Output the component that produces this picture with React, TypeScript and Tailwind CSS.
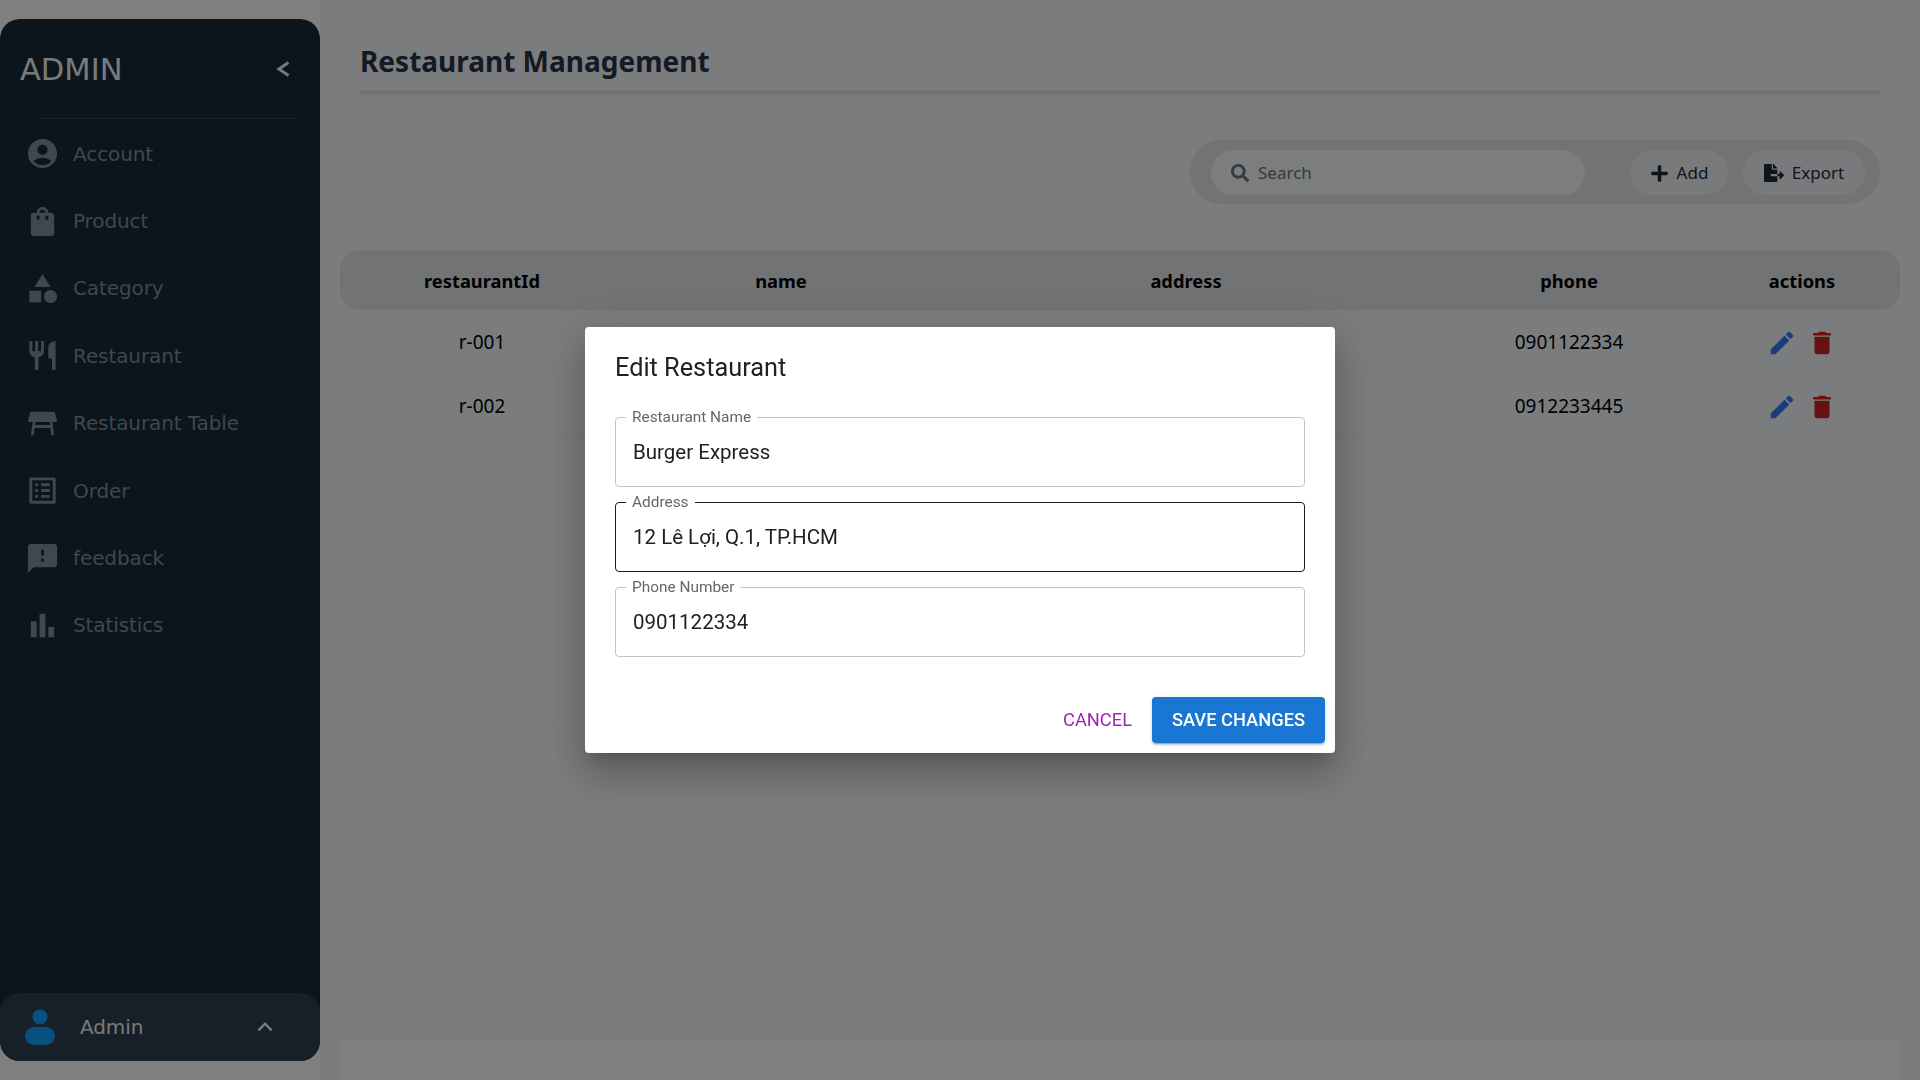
import {
  MdAccountCircle,
  MdBarChart,
  MdCategory,
  MdDelete,
  MdEdit,
  MdFeedback,
  MdKeyboardArrowUp,
  MdListAlt,
  MdRestaurant,
  MdShoppingBag,
  MdTableRestaurant,
} from "react-icons/md";
import { FaFileExport, FaPlus, FaSearch } from "react-icons/fa";

const navItems = [
  { label: "Account", icon: MdAccountCircle },
  { label: "Product", icon: MdShoppingBag },
  { label: "Category", icon: MdCategory },
  { label: "Restaurant", icon: MdRestaurant },
  { label: "Restaurant Table", icon: MdTableRestaurant },
  { label: "Order", icon: MdListAlt },
  { label: "feedback", icon: MdFeedback },
  { label: "Statistics", icon: MdBarChart },
];

const rows = [
  { id: "r-001", phone: "0901122334" },
  { id: "r-002", phone: "0912233445" },
];

const columns = ["restaurantId", "name", "address", "phone", "actions"];

const gridCols = "grid grid-cols-[284px_314px_496px_270px_196px]";

function Sidebar() {
  return (
    <aside className="mt-[19px] flex h-[1042px] w-[320px] shrink-0 flex-col rounded-[20px] bg-[#182839] font-['DejaVu_Sans',sans-serif]">
      <div className="flex h-[80px] items-center justify-between pl-5 pr-[30px] pt-[22px]">
        <span className="text-[30.5px] leading-none text-[#f3f4f6]">ADMIN</span>
        <svg width="14" height="16" viewBox="0 0 14 16" fill="none" className="mb-[3px] stroke-[#f3f4f6]">
          <polyline points="12.5,1.5 3,8 12.5,14.5" strokeWidth="3" />
        </svg>
      </div>
      <div className="ml-10 mr-5 mt-[19px] border-b border-[#2f4053]" />
      <nav className="mt-[1px] flex flex-col">
        {navItems.map((item) => (
          <a
            key={item.label}
            className="flex h-[67.4px] items-center gap-[13px] pl-[25px] text-[20px] tracking-[-0.1px] text-[#7e8ea2]"
          >
            <item.icon size={35} />
            {item.label}
          </a>
        ))}
      </nav>
      <div className="mt-auto flex h-[68px] items-center rounded-[20px] bg-[#2e3e52] pl-[25px] pr-[40px] text-[20px] tracking-[-0.1px] text-[#f3f4f6]">
        <svg width="30" height="36" viewBox="0 0 30 36" className="fill-[#14a0ff]">
          <circle cx="15" cy="8" r="7.5" />
          <rect x="0" y="18" width="30" height="18" rx="9" />
        </svg>
        <span className="ml-[25px]">Admin</span>
        <MdKeyboardArrowUp size={30} className="ml-auto" />
      </div>
    </aside>
  );
}

function Toolbar() {
  return (
    <div className="mt-[45px] flex justify-end pr-10">
      <div className="flex h-[64px] w-[690px] items-center rounded-[32px] bg-[#e5e7eb] pl-[21px] pr-[15px] font-['Noto_Sans',sans-serif] text-[17px] text-[#1f2937]">
        <div className="flex h-[45px] w-[374px] items-center gap-[9px] rounded-[23px] bg-[#f9fafb] pl-[20px] pt-[2px] text-[#6b7280]">
          <FaSearch size={18} />
          Search
        </div>
        <button className="ml-auto flex h-[45px] w-[98px] items-center justify-center gap-2 rounded-[23px] bg-[#f3f4f6] pt-[2px]">
          <FaPlus size={19} />
          Add
        </button>
        <button className="ml-[15px] flex h-[45px] w-[122px] items-center justify-center gap-2 rounded-[23px] bg-[#f3f4f6] pt-[2px]">
          <FaFileExport size={20} />
          Export
        </button>
      </div>
    </div>
  );
}

function RestaurantTable() {
  return (
    <div className="mx-5 mt-[46px] font-['Noto_Sans',sans-serif] text-[19px] text-black">
      <div className={`${gridCols} h-[60px] items-center rounded-[20px] bg-[#e5e7eb] pt-[2px] text-center text-[18.3px] font-bold`}>
        {columns.map((col) => (
          <div key={col}>{col}</div>
        ))}
      </div>
      {rows.map((row) => (
        <div key={row.id} className={`${gridCols} h-[64px] items-center border-b border-[#eceef1] pt-[2px] text-center`}>
          <div>{row.id}</div>
          <div />
          <div />
          <div>{row.phone}</div>
          <div className="flex items-center justify-center gap-[10px]">
            <MdEdit size={30} className="text-[#3578ee]" />
            <MdDelete size={30} className="text-[#d32020]" />
          </div>
        </div>
      ))}
    </div>
  );
}

function Field({ label, value, focused }: { label: string; value: string; focused?: boolean }) {
  return (
    <fieldset
      className={`h-[78px] rounded border pl-[17px] ${focused ? "border-[#1a1a1a]" : "border-[#c4c4c4]"}`}
    >
      <legend className="ml-[-7px] px-[6px] text-[15.4px] leading-[17px] text-[#666666]">{label}</legend>
      <div className="pt-[9px] text-[20.5px] leading-[34px] text-[#212121]">{value}</div>
    </fieldset>
  );
}

function EditDialog() {
  return (
    <div className="fixed inset-0 flex items-center justify-center bg-black/50">
      <div className="h-[426px] w-[750px] rounded bg-white font-['Roboto',sans-serif] shadow-[0_11px_15px_-7px_rgba(0,0,0,0.2),0_24px_38px_3px_rgba(0,0,0,0.14),0_9px_46px_8px_rgba(0,0,0,0.12)]">
        <h2 className="px-[30px] pt-[25px] text-[25.3px] leading-[32px] text-[#212121]">Edit Restaurant</h2>
        <div className="mt-[25px] flex flex-col gap-[7px] px-[30px]">
          <Field label="Restaurant Name" value="Burger Express" />
          <Field label="Address" value="12 Lê Lợi, Q.1, TP.HCM" focused />
          <Field label="Phone Number" value="0901122334" />
        </div>
        <div className="mt-[40px] flex items-center justify-end gap-5 pr-[10px] text-[18.3px]">
          <button className="text-[#9c27b0]">CANCEL</button>
          <button className="h-[46px] w-[173px] rounded bg-[#1976d2] font-medium text-white shadow-[0_3px_1px_-2px_rgba(0,0,0,0.2),0_2px_2px_0_rgba(0,0,0,0.14),0_1px_5px_0_rgba(0,0,0,0.12)]">
            SAVE CHANGES
          </button>
        </div>
      </div>
    </div>
  );
}

export default function App() {
  return (
    <div className="flex h-[1080px] overflow-hidden bg-white">
      <Sidebar />
      <main className="flex min-w-0 flex-1 flex-col bg-[#f6f8fc]">
        <div className="mx-10 h-[95px] border-b-[5px] border-[#e5e7eb] pt-[40px] font-['Noto_Sans',sans-serif] text-[28px] font-bold leading-[42px] text-[#283348]">
          Restaurant Management
        </div>
        <Toolbar />
        <RestaurantTable />
        <div className="mx-5 mt-auto h-[40px] bg-white" />
      </main>
      <EditDialog />
    </div>
  );
}
